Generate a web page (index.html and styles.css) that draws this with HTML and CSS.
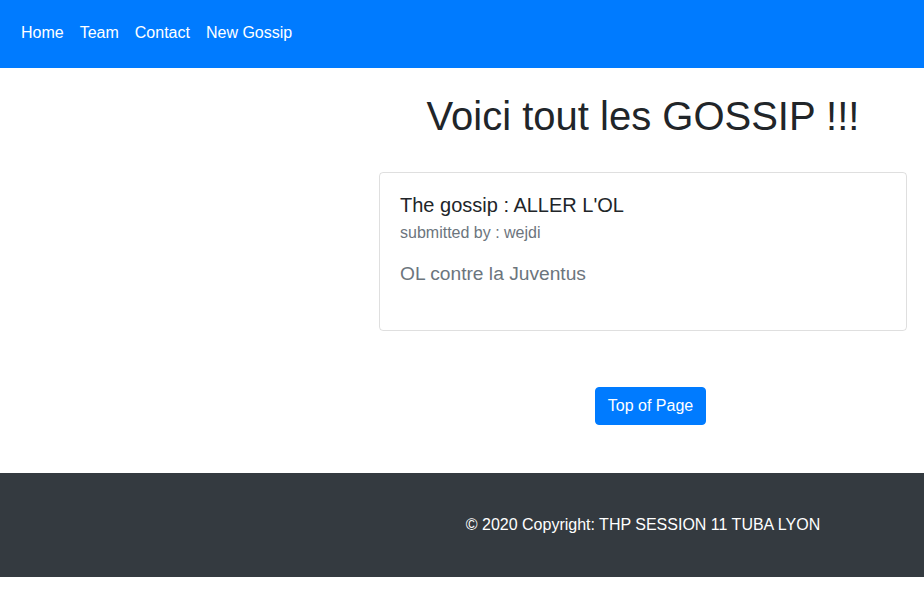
FILE: index.html
```html
<!DOCTYPE html>
<html lang="fr">
<head>
<meta charset="utf-8">
<title>Gossip</title>
<link rel="stylesheet" href="styles.css">
</head>
<body>
<nav class="navbar">
  <a class="nav-link" href="#">Home</a>
  <a class="nav-link" href="#">Team</a>
  <a class="nav-link" href="#">Contact</a>
  <a class="nav-link" href="#">New Gossip</a>
</nav>
<main class="layout">
  <div class="side"></div>
  <section class="content">
    <h1 class="title">Voici tout les GOSSIP !!!</h1>
    <div class="card">
      <h5 class="card-title">The gossip : ALLER L'OL</h5>
      <h6 class="card-subtitle">submitted by : wejdi</h6>
      <p class="card-text">OL contre la Juventus</p>
    </div>
    <div class="btn-row">
      <a class="btn" href="#">Top of Page</a>
    </div>
  </section>
</main>
<footer class="footer">
  <div class="side"></div>
  <div class="footer-text">© 2020 Copyright: THP SESSION 11 TUBA LYON</div>
</footer>
</body>
</html>
```
FILE: styles.css
```css
* { box-sizing: border-box; }
body {
  margin: 0;
  font-family: "Liberation Sans", Arial, sans-serif;
  font-size: 16px;
  line-height: 1.5;
  color: #212529;
  background: #fff;
}
.navbar {
  height: 68px;
  background: #007bff;
  display: flex;
  align-items: center;
  padding-left: 13px;
  padding-bottom: 2px;
}
.nav-link {
  color: #fff;
  text-decoration: none;
  padding: 0 8px;
}
.layout, .footer {
  display: grid;
  grid-template-columns: 379px 528px;
}
.title {
  margin: 24px 0 32px;
  font-size: 40px;
  font-weight: 400;
  line-height: 1.2;
  text-align: center;
  color: #212529;
}
.card {
  border: 1px solid rgba(0,0,0,0.125);
  border-radius: 4px;
  padding: 20px;
  height: 159px;
}
.card-title {
  margin: 0 0 6px;
  font-size: 20px;
  font-weight: 400;
  line-height: 1.2;
}
.card-subtitle {
  margin: 0;
  font-size: 16px;
  font-weight: 400;
  line-height: 1.2;
  color: #6c757d;
}
.card-text {
  margin: 18px 0 0;
  font-size: 19.2px;
  line-height: 1.5;
  color: #6c757d;
}
.btn-row {
  display: flex;
  justify-content: center;
  padding: 56px 0 48px 15px;
}
.btn {
  display: inline-block;
  background: #007bff;
  color: #fff;
  text-decoration: none;
  padding: 6px 12px;
  border: 1px solid #007bff;
  border-radius: 4px;
  line-height: 1.5;
}
.footer {
  background: #343a40;
  color: #fff;
  padding: 40px 0;
}
.footer-text {
  text-align: center;
}
```
